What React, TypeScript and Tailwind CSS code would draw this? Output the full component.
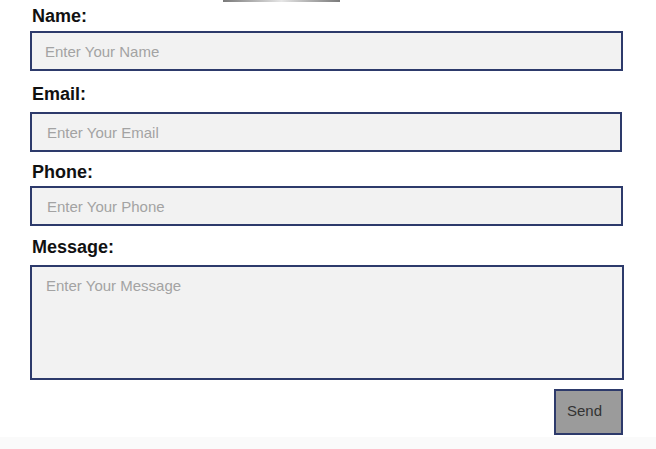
import React from "react";

const fieldClass =
    "block h-[40px] border-2 border-[#2d3a6b] bg-[#f2f2f2] text-[15px] text-[#333] placeholder:text-[#a3a3a3] outline-none";

export default function App() {
    return (
        <div className="relative w-[656px] h-[449px] overflow-hidden bg-white font-['Liberation_Sans',Arial,sans-serif]">
            <div className="ml-[223px] w-[117px] h-[2px] bg-gradient-to-r from-[#7a7a7a] via-[#e6e6e6] to-[#7a7a7a]" />

            <form className="ml-[30px] w-[594px] flex flex-col" onSubmit={(e) => e.preventDefault()}>
                <label className="mt-[5px] ml-[2px] text-[18px] leading-[18px] font-bold text-[#111]">Name:</label>
                <input type="text" placeholder="Enter Your Name" className={`${fieldClass} mt-[6px] w-[593px] pl-[13px]`} />

                <label className="mt-[14px] ml-[2px] text-[18px] leading-[18px] font-bold text-[#111]">Email:</label>
                <input type="email" placeholder="Enter Your Email" className={`${fieldClass} mt-[9px] w-[592px] pl-[15px]`} />

                <label className="mt-[11px] ml-[2px] text-[18px] leading-[18px] font-bold text-[#111]">Phone:</label>
                <input type="tel" placeholder="Enter Your Phone" className={`${fieldClass} mt-[5px] w-[593px] pl-[15px]`} />

                <label className="mt-[12px] ml-[2px] text-[18px] leading-[18px] font-bold text-[#111]">Message:</label>
                <textarea
                    placeholder="Enter Your Message"
                    className="block mt-[9px] w-[594px] h-[115px] resize-none border-2 border-[#2d3a6b] bg-[#f2f2f2] pl-[14px] pt-[10px] text-[15px] leading-[18px] text-[#333] placeholder:text-[#a3a3a3] outline-none"
                />

                <div className="flex justify-end mt-[9px] pr-[1px]">
                    <button
                        type="submit"
                        className="w-[69px] h-[46px] border-2 border-[#2d3a6b] bg-[#9b9b9b] pl-[11px] pb-[1px] text-left text-[15px] text-[#333]"
                    >
                        Send
                    </button>
                </div>
            </form>

            <div className="absolute left-0 right-0 bottom-0 h-[12px] bg-[#fafafa]" />
        </div>
    );
}
